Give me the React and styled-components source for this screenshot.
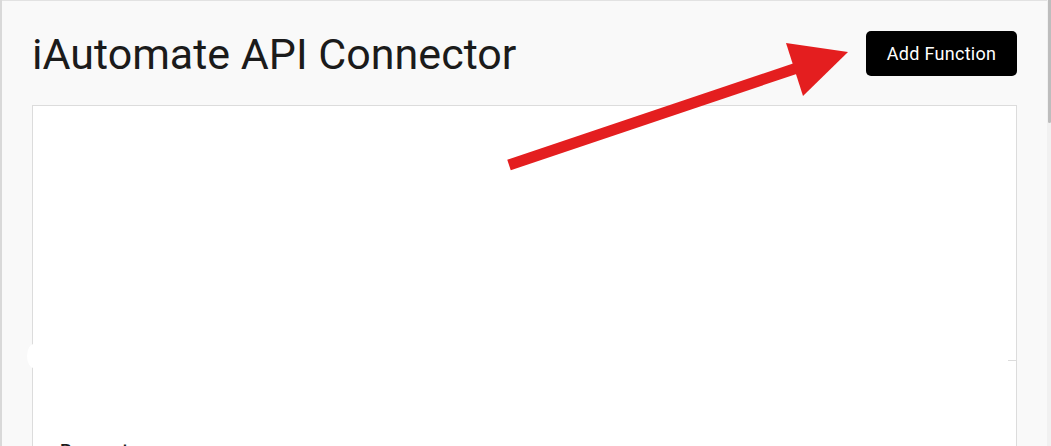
import React from "react";
import styled, { createGlobalStyle } from "styled-components";

const Global = createGlobalStyle`
  html, body { margin: 0; padding: 0; height: 100%; overflow: hidden; background: #f9f9f9; }
  body { font-family: Roboto, "Liberation Sans", Arial, sans-serif; }
  #root { height: 100%; }
`;

const Page = styled.div`
  position: relative;
  display: flex;
  width: 1051px;
  height: 446px;
  overflow: hidden;
`;

const LeftStrip = styled.div`
  width: 2px;
  flex: none;
  background: #d9d9d9;
`;

const Main = styled.main`
  flex: 1;
  min-width: 0;
  background: #f9f9f9;
  border-top: 1px solid #e2e2e2;
  padding: 30px 30px 0 30px;
  display: flex;
  flex-direction: column;
`;

const Header = styled.header`
  display: flex;
  align-items: center;
  justify-content: space-between;
  height: 45px;
  margin-bottom: 29px;
`;

const Title = styled.h1`
  margin: 0 0 0 0;
  font-family: Roboto, "Liberation Sans", sans-serif;
  font-weight: 400;
  font-size: 43px;
  line-height: 50px;
  color: #1b1b1b;
  letter-spacing: 0;
`;

const Button = styled.button`
  width: 151px;
  height: 45px;
  border: none;
  border-radius: 5px;
  background: #000;
  color: #fff;
  font-family: Roboto, "Liberation Sans", sans-serif;
  font-size: 18px;
  font-weight: 400;
  letter-spacing: 0.3px;
  padding: 0;
  cursor: pointer;
`;

const Card = styled.section`
  position: relative;
  background: #fff;
  border: 1px solid #dcdcdc;
  height: 500px;
  padding: 0 27px;
  flex: none;
`;

const Blank = styled.div`
  height: 333px;
`;

const SectionHeading = styled.h2`
  margin: 0;
  font-family: Roboto, "Liberation Sans", sans-serif;
  font-weight: 500;
  font-size: 18px;
  line-height: 24px;
  color: #1b1b1b;
`;

const Knob = styled.div`
  position: absolute;
  left: -6px;
  top: 238px;
  width: 14px;
  height: 24px;
  border-radius: 50%;
  background: #fff;
`;

const Tick = styled.div`
  position: absolute;
  right: 0;
  top: 254px;
  width: 8px;
  height: 1px;
  background: #dcdcdc;
`;

const Scrollbar = styled.div`
  width: 4px;
  flex: none;
  background: #f1f1f1;
  display: flex;
  flex-direction: column;
`;

const Thumb = styled.div`
  height: 123px;
  margin-left: 1px;
  background: #bdbdbd;
  border-radius: 0 0 2px 2px;
`;

const Overlay = styled.svg`
  position: absolute;
  left: 0;
  top: 0;
  pointer-events: none;
`;

export default function App() {
  return (
    <>
      <Global />
      <Page>
        <LeftStrip />
        <Main>
          <Header>
            <Title>iAutomate API Connector</Title>
            <Button>Add Function</Button>
          </Header>
          <Card>
            <Knob />
            <Tick />
            <Blank />
            <SectionHeading>Parameters</SectionHeading>
          </Card>
        </Main>
        <Scrollbar>
          <Thumb />
        </Scrollbar>
        <Overlay width="1051" height="446" viewBox="0 0 1051 446">
          <line x1="509" y1="165" x2="797" y2="68" stroke="#e41e1f" strokeWidth="11" />
          <polygon points="786,43 848,52 803,96" fill="#e41e1f" />
        </Overlay>
      </Page>
    </>
  );
}
